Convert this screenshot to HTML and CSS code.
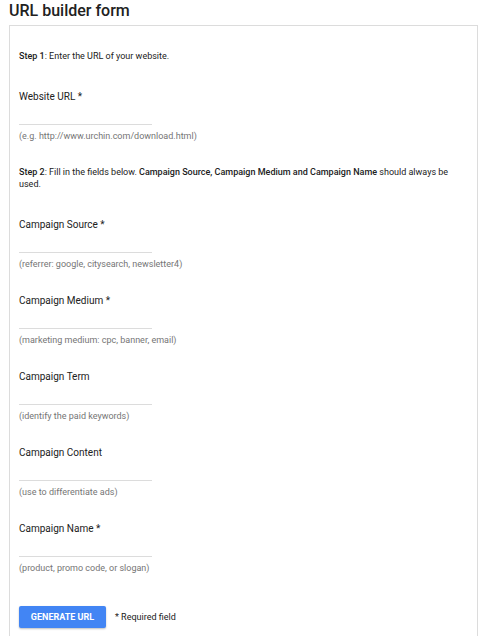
FILE: index.html
```html
<!DOCTYPE html>
<html>
<head>
    <title>URL builder form</title>
    <link rel="stylesheet" href="styles.css">
</head>
<body>

    <h1 class="page_title">URL builder form</h1>

    <!-- Formulario -->
    <form class="builder_panel">
        <p class="step"><b>Step 1</b>: Enter the URL of your website.</p>

        <div class="field">
            <label class="field_label" for="url">Website URL *</label>
            <input type="text" class="field_input" id="url">
            <div class="field_hint">(e.g. http://www.urchin.com/download.html)</div>
        </div>

        <p class="step"><b>Step 2</b>: Fill in the fields below. <b>Campaign Source, Campaign Medium and Campaign Name</b> should always be used.</p>

        <div class="field">
            <label class="field_label" for="source">Campaign Source *</label>
            <input type="text" class="field_input" id="source">
            <div class="field_hint">(referrer: google, citysearch, newsletter4)</div>
        </div>

        <div class="field">
            <label class="field_label" for="medium">Campaign Medium *</label>
            <input type="text" class="field_input" id="medium">
            <div class="field_hint">(marketing medium: cpc, banner, email)</div>
        </div>

        <div class="field">
            <label class="field_label" for="term">Campaign Term</label>
            <input type="text" class="field_input" id="term">
            <div class="field_hint">(identify the paid keywords)</div>
        </div>

        <div class="field">
            <label class="field_label" for="content">Campaign Content</label>
            <input type="text" class="field_input" id="content">
            <div class="field_hint">(use to differentiate ads)</div>
        </div>

        <div class="field">
            <label class="field_label" for="name">Campaign Name *</label>
            <input type="text" class="field_input" id="name">
            <div class="field_hint">(product, promo code, or slogan)</div>
        </div>

        <div class="actions">
            <button type="button" class="generate_btn">Generate URL</button>
            <span class="required_note">* Required field</span>
        </div>
    </form>

</body>
</html>
```

FILE: styles.css
```css
body {
    margin: 0;
    padding: 0 9px;
    font-family: Roboto, "Liberation Sans", sans-serif;
    color: #212121;
    background-color: #fff;
}

/* Título */
.page_title {
    margin: 0 0 3px 0;
    font-size: 16px;
    font-weight: 500;
    line-height: 22px;
}

/* Panel del formulario */
.builder_panel {
    border: 1px solid #dcdcdc;
    border-bottom: none;
    padding: 24px 9px 8px 9px;
}

.step {
    margin: 0 0 28px 0;
    font-size: 9px;
    line-height: 12px;
}

.step b {
    font-weight: 500;
}

.field {
    margin-bottom: 24px;
}

.field_label {
    display: block;
    font-size: 10px;
    line-height: 14px;
}

.field_input {
    display: block;
    box-sizing: border-box;
    width: 133px;
    height: 21px;
    padding: 0;
    border: none;
    border-bottom: 1px solid #dcdcdc;
    outline: none;
    background: transparent;
}

.field_hint {
    margin-top: 5px;
    font-size: 9px;
    line-height: 12px;
    color: #757575;
}

/* Botón */
.actions {
    display: flex;
    align-items: center;
    gap: 9px;
    margin-top: 32px;
}

.generate_btn {
    width: 87px;
    height: 22px;
    padding: 0;
    border: none;
    border-radius: 2px;
    background-color: #4285f4;
    color: #fff;
    font-family: Roboto, "Liberation Sans", sans-serif;
    font-size: 9px;
    font-weight: 700;
    text-transform: uppercase;
    box-shadow: 0 1px 2px rgba(0, 0, 0, 0.25);
}

.required_note {
    font-size: 9px;
}
```
